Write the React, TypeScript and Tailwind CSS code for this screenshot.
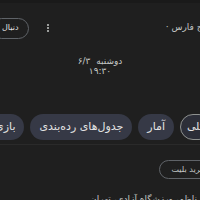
import React from "react";

const font = { fontFamily: '"DejaVu Sans", sans-serif' };

const Chip = ({ label, active }: { label: string; active?: boolean }) => (
  <div
    className={`shrink-0 h-[26px] rounded-full flex items-center text-[11px] text-[#e3e3e3] whitespace-nowrap ${
      active ? "px-[6px] border border-[#8e918f] bg-[#2c2e38]" : "px-[9px] bg-[#363946]"
    }`}
  >
    {label}
  </div>
);

export default function App() {
  return (
    <div dir="rtl" className="w-[200px] h-[200px] overflow-hidden bg-[#1f1f1f]" style={font}>
      <div className="h-[3px] bg-[#1a1a1a]" />
      {/* header */}
      <div className="flex items-center justify-between mt-[14px] h-[22px]">
        <div className="shrink-0 mr-[-48px] text-[9px] text-[#c4c7c5] whitespace-nowrap">
          لیگ برتر خلیج فارس ·
        </div>
        <div className="flex items-center gap-[18px]">
          <div className="flex flex-col gap-[1px]">
            <span className="w-[2px] h-[2px] rounded-full bg-[#c4c7c5]" />
            <span className="w-[2px] h-[2px] rounded-full bg-[#c4c7c5]" />
            <span className="w-[2px] h-[2px] rounded-full bg-[#c4c7c5]" />
          </div>
          <div className="ml-[-9px] h-[21px] rounded-full border border-[#5f6368] px-[10px] flex items-center text-[8px] text-[#e3e3e3] whitespace-nowrap">
            دنبال
          </div>
        </div>
      </div>
      {/* date */}
      <div className="mt-[17px] flex flex-col items-center text-[9px] leading-[10px] text-[#c4c7c5]">
        <div>دوشنبه&nbsp;&nbsp;۶/۳</div>
        <div>۱۹:۳۰</div>
      </div>
      {/* teams */}
      <div className="flex justify-end mt-[13px] h-[12px]">
        <div className="ml-[-38px] text-[9px] leading-[12px] text-[#c4c7c5] whitespace-nowrap">استقلال</div>
      </div>
      {/* tabs */}
      <div className="mt-[13px] flex gap-[6px] mr-[-12px]">
        <Chip label="کلی" active />
        <Chip label="آمار" />
        <Chip label="جدول‌های رده‌بندی" />
        <Chip label="بازی‌های بیشتر" />
      </div>
      <div className="mt-[4px] h-px bg-[#2a2a2a]" />
      {/* ticket */}
      <div className="flex mt-[15px]">
        <div className="mr-[-18px] h-[19px] rounded-full border border-[#5f6368] px-[12px] flex items-center text-[8px] text-[#c4c7c5] whitespace-nowrap">
          خرید بلیت
        </div>
      </div>
      {/* venue */}
      <div className="mt-[14px] mr-[3px] text-[9px] leading-[12px] text-[#c4c7c5] whitespace-nowrap">
        ناظم، ورزشگاه آزادی، تهران
      </div>
    </div>
  );
}
